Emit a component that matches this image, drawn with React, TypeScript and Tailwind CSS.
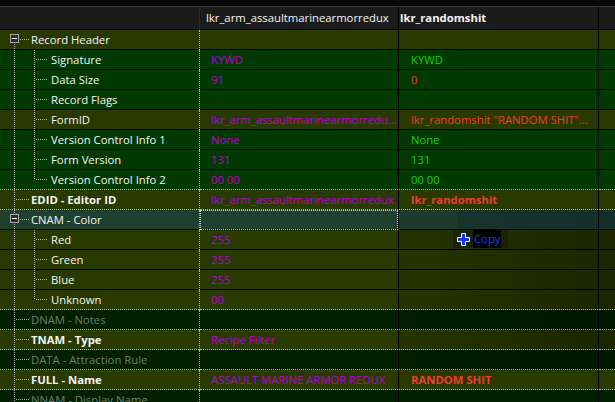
import type { ReactNode } from 'react'

type Row = {
    label: string
    depth: 0 | 1
    expander?: boolean
    last?: boolean
    first?: boolean
    bold?: boolean
    disabled?: boolean
    bg: string
    bg3?: string
    bg4?: string
    v2?: string
    v3?: string
    c3?: 'g' | 'r'
    b3?: boolean
    selected?: boolean
}

const OLIVE = 'bg-[#283a00]'
const GREEN = 'bg-[#003a00]'
const DARK = 'bg-[#002000]'
const SEL = 'bg-[#20402f]'
const DRAG_OLIVE = 'bg-[linear-gradient(to_right,#243400,#1c2800)]'
const DRAG_OLIVE4 = 'bg-[#1c2700]'
const DRAG_DARK = 'bg-[linear-gradient(to_right,#001d00,#001800)]'
const DRAG_DARK4 = 'bg-[#001800]'

const rows: Row[] = [
    { label: 'Record Header', depth: 0, expander: true, first: true, bg: OLIVE },
    { label: 'Signature', depth: 1, bg: GREEN, v2: 'KYWD', v3: 'KYWD', c3: 'g' },
    { label: 'Data Size', depth: 1, bg: GREEN, v2: '91', v3: '0', c3: 'r' },
    { label: 'Record Flags', depth: 1, bg: GREEN },
    { label: 'FormID', depth: 1, bg: OLIVE, v2: 'lkr_arm_assaultmarinearmorredu...', v3: 'lkr_randomshit "RANDOM SHIT"...', c3: 'r' },
    { label: 'Version Control Info 1', depth: 1, bg: GREEN, v2: 'None', v3: 'None', c3: 'g' },
    { label: 'Form Version', depth: 1, bg: GREEN, v2: '131', v3: '131', c3: 'g' },
    { label: 'Version Control Info 2', depth: 1, last: true, bg: GREEN, v2: '00 00', v3: '00 00', c3: 'g' },
    { label: 'EDID - Editor ID', depth: 0, bold: true, bg: OLIVE, v2: 'lkr_arm_assaultmarinearmorredux', v3: 'lkr_randomshit', c3: 'r', b3: true },
    { label: 'CNAM - Color', depth: 0, expander: true, selected: true, bg: SEL, bg3: 'bg-[linear-gradient(to_right,#1e3c2e_58px,#17332a_58px,#14302a)]', bg4: 'bg-[#14302a]' },
    { label: 'Red', depth: 1, bg: OLIVE, bg3: DRAG_OLIVE, bg4: DRAG_OLIVE4, v2: '255' },
    { label: 'Green', depth: 1, bg: OLIVE, bg3: DRAG_OLIVE, bg4: DRAG_OLIVE4, v2: '255' },
    { label: 'Blue', depth: 1, bg: OLIVE, bg3: DRAG_OLIVE, bg4: DRAG_OLIVE4, v2: '255' },
    { label: 'Unknown', depth: 1, last: true, bg: OLIVE, bg3: DRAG_OLIVE, bg4: DRAG_OLIVE4, v2: '00' },
    { label: 'DNAM - Notes', depth: 0, disabled: true, bg: DARK, bg3: DRAG_DARK, bg4: DRAG_DARK4 },
    { label: 'TNAM - Type', depth: 0, bold: true, bg: OLIVE, bg3: DRAG_OLIVE, bg4: DRAG_OLIVE4, v2: 'Recipe Filter' },
    { label: 'DATA - Attraction Rule', depth: 0, disabled: true, bg: DARK, bg3: DRAG_DARK, bg4: DRAG_DARK4 },
    { label: 'FULL - Name', depth: 0, bold: true, bg: OLIVE, v2: 'ASSAULT MARINE ARMOR REDUX', v3: 'RANDOM SHIT', c3: 'r', b3: true },
    { label: 'NNAM - Display Name', depth: 0, disabled: true, bg: DARK },
]

// dotted tree lines, one dot every other pixel
const vDots = (x: number, y1: number, y2: number) => {
    const out: ReactNode[] = []
    for (let y = y1; y <= y2; y++) if (y % 2 === 0) out.push(<rect key={`v${x}-${y}`} x={x} y={y} width={1} height={1} />)
    return out
}
const hDots = (y: number, x1: number, x2: number) => {
    const out: ReactNode[] = []
    for (let x = x1; x <= x2; x++) if (x % 2 === 0) out.push(<rect key={`h${y}-${x}`} x={x} y={y} width={1} height={1} />)
    return out
}

function Tree({ row }: { row: Row }) {
    const w = row.depth === 0 ? 31 : 51
    return (
        <svg width={w} height={20} className="shrink-0" fill="#b4b4b4">
            {row.depth === 0 && !row.expander && <>{vDots(14, 0, 19)}{hDots(9, 16, 28)}</>}
            {row.depth === 0 && row.expander && (
                <>
                    {!row.first && vDots(14, 0, 3)}
                    {vDots(14, 14, 19)}
                    {hDots(9, 20, 28)}
                    <rect x={10.5} y={4.5} width={8} height={8} fill="#2c2c2c" stroke="#a8a8a8" />
                    <rect x={12} y={8} width={5} height={1} fill="#ffffff" />
                </>
            )}
            {row.depth === 1 && (
                <>
                    {vDots(14, 0, 19)}
                    {vDots(34, 0, row.last ? 9 : 19)}
                    {hDots(9, 36, 47)}
                </>
            )}
        </svg>
    )
}

function GridRow({ row, next }: { row: Row; next?: Row }) {
    const dotted = next && next.depth === 0
    const line = dotted ? 'border-b border-dotted border-[#b4b4b4]' : 'border-b border-black'
    const labelColor = row.disabled ? 'text-[#6f7f6f]' : 'text-[#f4f4f4]'
    const c3 = row.c3 === 'g' ? 'text-[#22c822]' : 'text-[#f23c32]'
    return (
        <div className="flex h-[20px]">
            <div className={`w-[199px] flex items-center overflow-hidden ${row.bg} ${line}`}>
                <Tree row={row} />
                <span className={`whitespace-nowrap ${labelColor} ${row.bold ? 'font-bold' : ''}`}>{row.label}</span>
            </div>
            <div className={`w-px ${row.bg} border-l border-dotted border-[#b4b4b4]`} />
            <div className={`w-[198px] flex items-center overflow-hidden pl-[11px] ${row.bg} ${line} ${row.selected ? 'outline outline-1 outline-dotted outline-[#c8c8c8] -outline-offset-1' : ''}`}>
                {row.v2 && <span className="whitespace-nowrap text-[#bc00d8]">{row.v2}</span>}
            </div>
            <div className="w-px bg-black" />
            <div className={`w-[199px] flex items-center overflow-hidden pl-[12px] ${row.bg3 ?? row.bg} ${line}`}>
                {row.v3 && <span className={`whitespace-nowrap ${c3} ${row.b3 ? 'font-bold' : ''}`}>{row.v3}</span>}
            </div>
            <div className="w-px bg-black" />
            <div className={`flex-1 ${row.bg4 ?? row.bg3 ?? row.bg} ${line}`} />
        </div>
    )
}

export default function App() {
    return (
        <div className="relative w-[615px] h-[402px] overflow-hidden bg-[#002000] text-[11.3px] leading-none font-['Open_Sans','Noto_Sans',sans-serif]">
            {/* toolbar edge */}
            <div className="h-[7px] bg-[#090909] border-b border-[#3c3c3c]" />

            {/* column headers */}
            <div className="flex h-[23px] bg-[#1b1b1b] border-b border-black text-[#f4f4f4]">
                <div className="w-[199px]" />
                <div className="w-px bg-[#2e2e2e]" />
                <div className="w-[198px] flex items-center overflow-hidden pl-[6px] whitespace-nowrap">lkr_arm_assaultmarinearmorredux</div>
                <div className="w-px bg-black" />
                <div className="w-[199px] flex items-center overflow-hidden pl-[1px] font-bold whitespace-nowrap">lkr_randomshit</div>
                <div className="w-px bg-black" />
                <div className="flex-1" />
            </div>

            {rows.map((row, i) => (
                <GridRow key={row.label} row={row} next={rows[i + 1]} />
            ))}

            {/* drag & drop cursor */}
            <div className="absolute left-[453px] top-[230px] w-[55px] h-[18px] bg-[#1a2300] flex items-center">
                <svg width={13} height={13} viewBox="0 0 13 13" className="ml-[4px]">
                    <path d="M4.5 0.5h4v4h4v4h-4v4h-4v-4h-4v-4h4z" fill="#1236e6" stroke="#ffffff" strokeWidth={1} />
                </svg>
                <span className="ml-[3px] h-[18px] px-[1px] bg-black text-[#1d3ef0] flex items-center">Copy</span>
            </div>
        </div>
    )
}
